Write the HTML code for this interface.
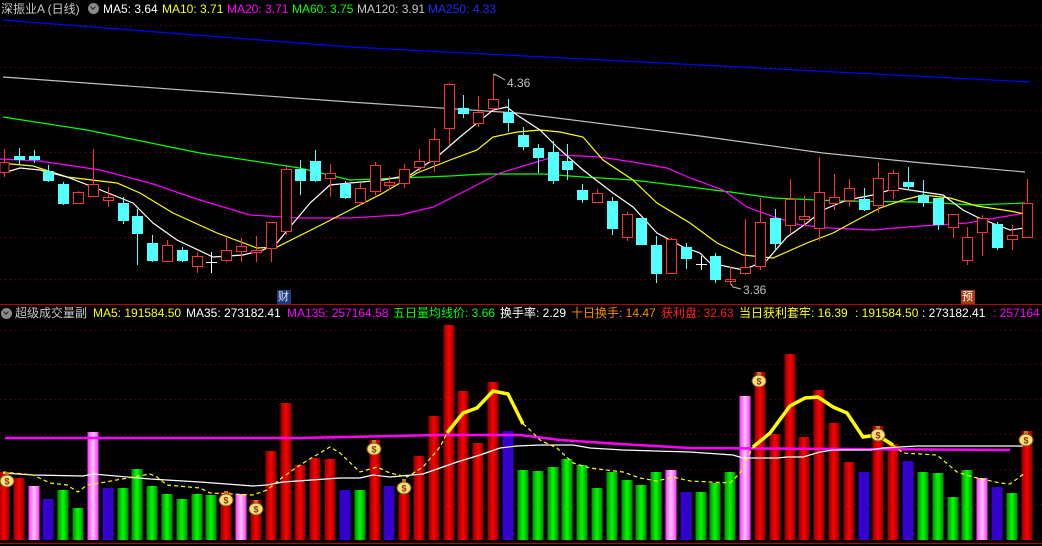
<!DOCTYPE html>
<html><head><meta charset="utf-8"><style>
html,body{margin:0;padding:0;background:#000;width:1042px;height:546px;overflow:hidden}
#w{position:relative;width:1042px;height:546px}
svg{position:absolute;left:0;top:0}
.t{position:absolute;font-family:"Liberation Sans","Noto Sans CJK SC",sans-serif;font-size:12px;white-space:nowrap;line-height:14px}
.ic{position:absolute;width:11px;height:11px;border-radius:50%;background:#8a8a8a}
.ic:after{content:"";position:absolute;left:3px;top:2px;width:3px;height:3px;border-right:1.5px solid #222;border-bottom:1.5px solid #222;transform:rotate(45deg)}
</style></head><body><div id="w">
<svg width="1042" height="546" viewBox="0 0 1042 546">
<defs>
<linearGradient id="gr" x1="0" x2="1"><stop offset="0" stop-color="#8a0000"/><stop offset=".5" stop-color="#ff0000"/><stop offset="1" stop-color="#8a0000"/></linearGradient>
<linearGradient id="gg" x1="0" x2="1"><stop offset="0" stop-color="#008a00"/><stop offset=".5" stop-color="#00ff00"/><stop offset="1" stop-color="#008a00"/></linearGradient>
<linearGradient id="gp" x1="0" x2="1"><stop offset="0" stop-color="#ff30ff"/><stop offset=".5" stop-color="#ffc8ff"/><stop offset="1" stop-color="#ff30ff"/></linearGradient>
</defs>
<g stroke="#8a0000" stroke-dasharray="1 4" stroke-width="1">
<line x1="0" x2="1042" y1="25.5" y2="25.5"/><line x1="0" x2="1042" y1="67.5" y2="67.5"/><line x1="0" x2="1042" y1="110.5" y2="110.5"/><line x1="0" x2="1042" y1="152.5" y2="152.5"/><line x1="0" x2="1042" y1="195.5" y2="195.5"/><line x1="0" x2="1042" y1="237.5" y2="237.5"/><line x1="0" x2="1042" y1="279.5" y2="279.5"/>
<line x1="0" x2="1042" y1="330.5" y2="330.5"/><line x1="0" x2="1042" y1="364.5" y2="364.5"/><line x1="0" x2="1042" y1="399.5" y2="399.5"/><line x1="0" x2="1042" y1="434.5" y2="434.5"/><line x1="0" x2="1042" y1="469.5" y2="469.5"/><line x1="0" x2="1042" y1="504.5" y2="504.5"/>
</g>
<line x1="0" x2="1042" y1="304.5" y2="304.5" stroke="#b00000"/>
<line x1="0" x2="1042" y1="543.5" y2="543.5" stroke="#b00000"/>
<!-- MA lines -->
<g fill="none" stroke-width="1.2">
<polyline stroke="#0000ff" points="3,20 350,47 603,60 1030,82"/>
<polyline stroke="#c0c0c0" points="3,77 350,102 517,113 700,136 823,153 923,163 1025,172"/>
<polyline stroke="#00ff00" points="3,117 87,130 200,153 300,168 350,180 450,176 483,174 543,174 583,177 633,180 690,187 730,192 773,198 840,201 923,202 973,205 1025,203"/>
<polyline stroke="#ff00ff" points="0,159 40,161 100,170 150,183 200,200 250,215 300,218 350,218 400,215 433,207 467,190 500,173 533,163 560,155 600,157 633,162 667,168 690,178 723,190 747,207 777,218 800,225 830,228 873,230 907,227 937,225 967,223 990,219 1025,213"/>
<polyline stroke="#ffff00" points="0,163 33,166 67,177 117,183 140,193 173,213 217,233 257,248 277,247 317,227 350,210 383,193 417,173 450,160 477,150 493,137 517,132 540,130 560,132 583,137 603,160 633,180 657,203 690,223 717,243 743,255 773,258 807,243 833,233 857,220 880,208 903,200 923,195 950,198 977,206 1010,211 1025,214"/>
<polyline stroke="#ffffff" points="3,173 20,168 40,170 67,177 93,187 133,203 153,223 177,240 213,257 243,255 263,250 277,243 290,227 310,203 330,185 350,183 383,180 410,175 437,157 460,137 493,110 507,107 517,115 540,130 557,147 583,170 613,193 633,207 657,233 683,247 700,253 710,263 743,270 767,260 787,237 807,223 823,210 847,200 873,195 897,188 923,192 943,195 963,210 977,217 997,225 1010,230 1025,228"/>
</g>
<!-- red candles -->
<g stroke="#ff3232" fill="#000" stroke-width="1">
<line x1="4.5" x2="4.5" y1="149" y2="177"/><rect x="0" y="162.5" width="9" height="10"/>
<line x1="78.5" x2="78.5" y1="191" y2="203"/><rect x="73.5" y="192.5" width="10" height="11"/>
<line x1="93.5" x2="93.5" y1="149" y2="197"/><rect x="88.5" y="184.5" width="10" height="12"/>
<line x1="108.5" x2="108.5" y1="187" y2="207"/><rect x="103.5" y="197.5" width="10" height="3"/>
<line x1="167.5" x2="167.5" y1="240" y2="262"/><rect x="162.5" y="245.5" width="10" height="16"/>
<line x1="197.5" x2="197.5" y1="252" y2="273"/><rect x="192.5" y="256.5" width="10" height="10"/>
<line x1="226.5" x2="226.5" y1="238" y2="262"/><rect x="221.5" y="250.5" width="10" height="10"/>
<line x1="241.5" x2="241.5" y1="238" y2="262"/><rect x="236.5" y="246.5" width="10" height="5"/>
<line x1="256.5" x2="256.5" y1="236" y2="262"/><rect x="251.5" y="250.5" width="10" height="2"/>
<line x1="271.5" x2="271.5" y1="222" y2="262"/><rect x="266.5" y="222.5" width="10" height="26"/>
<line x1="286.5" x2="286.5" y1="166" y2="235"/><rect x="281.5" y="169.5" width="10" height="62"/>
<line x1="330.5" x2="330.5" y1="164" y2="197"/><rect x="325.5" y="173.5" width="10" height="5"/>
<line x1="360.5" x2="360.5" y1="183" y2="205"/><rect x="355.5" y="188.5" width="10" height="14"/>
<line x1="375.5" x2="375.5" y1="162" y2="195"/><rect x="370.5" y="165.5" width="10" height="26"/>
<line x1="389.5" x2="389.5" y1="176" y2="190"/><rect x="384.5" y="182.5" width="10" height="3"/>
<line x1="404.5" x2="404.5" y1="164" y2="188"/><rect x="399.5" y="169.5" width="10" height="14"/>
<line x1="419.5" x2="419.5" y1="149" y2="172"/><rect x="414.5" y="161.5" width="10" height="6"/>
<line x1="434.5" x2="434.5" y1="128" y2="172"/><rect x="429.5" y="139.5" width="10" height="22"/>
<line x1="449.5" x2="449.5" y1="83" y2="145"/><rect x="444.5" y="84.5" width="10" height="44"/>
<line x1="478.5" x2="478.5" y1="96" y2="127"/><rect x="473.5" y="112.5" width="10" height="11"/>
<line x1="493.5" x2="493.5" y1="76" y2="110"/><rect x="488.5" y="99.5" width="10" height="9"/>
<line x1="597.5" x2="597.5" y1="189" y2="203"/><rect x="592.5" y="193.5" width="10" height="9"/>
<line x1="627.5" x2="627.5" y1="212" y2="241"/><rect x="622.5" y="214.5" width="10" height="23"/>
<line x1="671.5" x2="671.5" y1="238" y2="274"/><rect x="666.5" y="239.5" width="10" height="34"/>
<line x1="730.5" x2="730.5" y1="267" y2="285"/><rect x="725.5" y="279.5" width="10" height="2"/>
<line x1="745.5" x2="745.5" y1="219" y2="275"/><rect x="740.5" y="267.5" width="10" height="6"/>
<line x1="760.5" x2="760.5" y1="198" y2="270"/><rect x="755.5" y="222.5" width="10" height="44"/>
<line x1="790.5" x2="790.5" y1="179" y2="233"/><rect x="785.5" y="199.5" width="10" height="26"/>
<line x1="804.5" x2="804.5" y1="196" y2="226"/><rect x="799.5" y="216.5" width="10" height="3"/>
<line x1="819.5" x2="819.5" y1="157" y2="241"/><rect x="814.5" y="192.5" width="10" height="36"/>
<line x1="834.5" x2="834.5" y1="174" y2="210"/><rect x="829.5" y="197.5" width="10" height="6"/>
<line x1="849.5" x2="849.5" y1="179" y2="207"/><rect x="844.5" y="188.5" width="10" height="12"/>
<line x1="878.5" x2="878.5" y1="162" y2="213"/><rect x="873.5" y="178.5" width="10" height="27"/>
<line x1="893.5" x2="893.5" y1="170" y2="199"/><rect x="888.5" y="173.5" width="10" height="17"/>
<line x1="953.5" x2="953.5" y1="214" y2="238"/><rect x="948.5" y="214.5" width="10" height="13"/>
<line x1="967.5" x2="967.5" y1="227" y2="265"/><rect x="962.5" y="237.5" width="10" height="23"/>
<line x1="982.5" x2="982.5" y1="215" y2="256"/><rect x="977.5" y="218.5" width="10" height="14"/>
<line x1="1012.5" x2="1012.5" y1="225" y2="250"/><rect x="1007.5" y="235.5" width="10" height="4"/>
<line x1="1027.5" x2="1027.5" y1="179" y2="237"/><rect x="1022.5" y="203.5" width="10" height="34"/>
</g>
<!-- cyan candles -->
<g stroke="#54ffff" fill="#54ffff" stroke-width="1">
<line x1="19.5" x2="19.5" y1="148" y2="165"/><rect x="14.5" y="156.5" width="10" height="3"/>
<line x1="34.5" x2="34.5" y1="150" y2="163"/><rect x="29.5" y="156.5" width="10" height="3"/>
<line x1="48.5" x2="48.5" y1="165" y2="182"/><rect x="43.5" y="171.5" width="10" height="9"/>
<line x1="63.5" x2="63.5" y1="182" y2="205"/><rect x="58.5" y="184.5" width="10" height="19"/>
<line x1="123.5" x2="123.5" y1="197" y2="224"/><rect x="118.5" y="203.5" width="10" height="17"/>
<line x1="137.5" x2="137.5" y1="209" y2="265"/><rect x="132.5" y="216.5" width="10" height="17"/>
<line x1="152.5" x2="152.5" y1="235" y2="262"/><rect x="147.5" y="243.5" width="10" height="17"/>
<line x1="182.5" x2="182.5" y1="247" y2="262"/><rect x="177.5" y="250.5" width="10" height="10"/>
<line x1="300.5" x2="300.5" y1="160" y2="195"/><rect x="295.5" y="169.5" width="10" height="11"/>
<line x1="315.5" x2="315.5" y1="150" y2="182"/><rect x="310.5" y="161.5" width="10" height="19"/>
<line x1="345.5" x2="345.5" y1="181" y2="199"/><rect x="340.5" y="184.5" width="10" height="13"/>
<line x1="463.5" x2="463.5" y1="95" y2="118"/><rect x="458.5" y="108.5" width="10" height="5"/>
<line x1="508.5" x2="508.5" y1="99" y2="132"/><rect x="503.5" y="112.5" width="10" height="10"/>
<line x1="523.5" x2="523.5" y1="127" y2="150"/><rect x="518.5" y="135.5" width="10" height="11"/>
<line x1="538.5" x2="538.5" y1="144" y2="173"/><rect x="533.5" y="148.5" width="10" height="9"/>
<line x1="553.5" x2="553.5" y1="141" y2="184"/><rect x="548.5" y="152.5" width="10" height="28"/>
<line x1="567.5" x2="567.5" y1="144" y2="180"/><rect x="562.5" y="161.5" width="10" height="8"/>
<line x1="582.5" x2="582.5" y1="184" y2="203"/><rect x="577.5" y="190.5" width="10" height="9"/>
<line x1="612.5" x2="612.5" y1="197" y2="235"/><rect x="607.5" y="201.5" width="10" height="27"/>
<line x1="641.5" x2="641.5" y1="218" y2="245"/><rect x="636.5" y="218.5" width="10" height="26"/>
<line x1="656.5" x2="656.5" y1="236" y2="283"/><rect x="651.5" y="245.5" width="10" height="28"/>
<line x1="686.5" x2="686.5" y1="243" y2="269"/><rect x="681.5" y="247.5" width="10" height="11"/>
<line x1="715.5" x2="715.5" y1="253" y2="283"/><rect x="710.5" y="256.5" width="10" height="23"/>
<line x1="775.5" x2="775.5" y1="209" y2="250"/><rect x="770.5" y="218.5" width="10" height="25"/>
<line x1="864.5" x2="864.5" y1="188" y2="211"/><rect x="859.5" y="199.5" width="10" height="10"/>
<line x1="908.5" x2="908.5" y1="167" y2="190"/><rect x="903.5" y="182.5" width="10" height="4"/>
<line x1="923.5" x2="923.5" y1="180" y2="207"/><rect x="918.5" y="195.5" width="10" height="7"/>
<line x1="938.5" x2="938.5" y1="198" y2="230"/><rect x="933.5" y="198.5" width="10" height="26"/>
<line x1="997.5" x2="997.5" y1="222" y2="250"/><rect x="992.5" y="224.5" width="10" height="23"/>
</g>
<g stroke="#fff"><line x1="211.5" x2="211.5" y1="252" y2="273"/><line x1="206" x2="217" y1="262.5" y2="262.5"/>
<line x1="701.5" x2="701.5" y1="256" y2="270"/><line x1="696" x2="707" y1="264.5" y2="264.5"/></g>
<g stroke="#c0c0c0" fill="none"><polyline points="494,76 494,74 498,76 505,80"/><polyline points="731,284 733,287 741,289"/></g>
<text x="507" y="87" fill="#c0c0c0" font-family="Liberation Sans" font-size="12">4.36</text>
<text x="743" y="294" fill="#c0c0c0" font-family="Liberation Sans" font-size="12">3.36</text>
<!-- volume bars -->
<g>
<rect x="-1.5" y="472" width="11" height="68" fill="url(#gr)"/>
<rect x="13.5" y="478" width="11" height="62" fill="url(#gr)"/>
<rect x="28.5" y="486" width="11" height="54" fill="url(#gp)"/>
<rect x="42.5" y="499" width="11" height="41" fill="#3300cc"/>
<rect x="57.5" y="490" width="11" height="50" fill="url(#gg)"/>
<rect x="72.5" y="508" width="11" height="32" fill="url(#gg)"/>
<rect x="87.5" y="432" width="11" height="108" fill="url(#gp)"/>
<rect x="102.5" y="488" width="11" height="52" fill="#3300cc"/>
<rect x="117.5" y="488" width="11" height="52" fill="url(#gg)"/>
<rect x="131.5" y="469" width="11" height="71" fill="url(#gg)"/>
<rect x="146.5" y="486" width="11" height="54" fill="url(#gg)"/>
<rect x="161.5" y="494" width="11" height="46" fill="url(#gg)"/>
<rect x="176.5" y="499" width="11" height="41" fill="url(#gg)"/>
<rect x="191.5" y="494" width="11" height="46" fill="url(#gg)"/>
<rect x="205.5" y="495" width="11" height="45" fill="url(#gg)"/>
<rect x="220.5" y="492" width="11" height="48" fill="url(#gr)"/>
<rect x="235.5" y="494" width="11" height="46" fill="url(#gp)"/>
<rect x="250.5" y="500" width="11" height="40" fill="url(#gr)"/>
<rect x="265.5" y="451" width="11" height="89" fill="url(#gr)"/>
<rect x="280.5" y="403" width="11" height="137" fill="url(#gr)"/>
<rect x="294.5" y="465" width="11" height="75" fill="url(#gr)"/>
<rect x="309.5" y="458" width="11" height="82" fill="url(#gr)"/>
<rect x="324.5" y="459" width="11" height="81" fill="url(#gr)"/>
<rect x="339.5" y="490" width="11" height="50" fill="#3300cc"/>
<rect x="354.5" y="490" width="11" height="50" fill="url(#gg)"/>
<rect x="369.5" y="440" width="11" height="100" fill="url(#gr)"/>
<rect x="383.5" y="486" width="11" height="54" fill="#3300cc"/>
<rect x="398.5" y="494" width="11" height="46" fill="url(#gr)"/>
<rect x="413.5" y="456" width="11" height="84" fill="url(#gr)"/>
<rect x="428.5" y="416" width="11" height="124" fill="url(#gr)"/>
<rect x="443.5" y="325" width="11" height="215" fill="url(#gr)"/>
<rect x="457.5" y="391" width="11" height="149" fill="url(#gr)"/>
<rect x="472.5" y="443" width="11" height="97" fill="url(#gr)"/>
<rect x="487.5" y="382" width="11" height="158" fill="url(#gr)"/>
<rect x="502.5" y="431" width="11" height="109" fill="#3300cc"/>
<rect x="517.5" y="470" width="11" height="70" fill="url(#gg)"/>
<rect x="532.5" y="471" width="11" height="69" fill="url(#gg)"/>
<rect x="547.5" y="467" width="11" height="73" fill="url(#gg)"/>
<rect x="561.5" y="459" width="11" height="81" fill="url(#gg)"/>
<rect x="576.5" y="465" width="11" height="75" fill="url(#gg)"/>
<rect x="591.5" y="488" width="11" height="52" fill="url(#gg)"/>
<rect x="606.5" y="472" width="11" height="68" fill="url(#gg)"/>
<rect x="621.5" y="480" width="11" height="60" fill="url(#gg)"/>
<rect x="635.5" y="485" width="11" height="55" fill="url(#gg)"/>
<rect x="650.5" y="472" width="11" height="68" fill="url(#gg)"/>
<rect x="665.5" y="470" width="11" height="70" fill="url(#gp)"/>
<rect x="680.5" y="492" width="11" height="48" fill="#3300cc"/>
<rect x="695.5" y="492" width="11" height="48" fill="url(#gg)"/>
<rect x="709.5" y="483" width="11" height="57" fill="url(#gg)"/>
<rect x="724.5" y="472" width="11" height="68" fill="url(#gg)"/>
<rect x="739.5" y="396" width="11" height="144" fill="url(#gp)"/>
<rect x="754.5" y="372" width="11" height="168" fill="url(#gr)"/>
<rect x="769.5" y="434" width="11" height="106" fill="url(#gr)"/>
<rect x="784.5" y="354" width="11" height="186" fill="url(#gr)"/>
<rect x="798.5" y="437" width="11" height="103" fill="url(#gr)"/>
<rect x="813.5" y="390" width="11" height="150" fill="url(#gr)"/>
<rect x="828.5" y="423" width="11" height="117" fill="url(#gr)"/>
<rect x="843.5" y="462" width="11" height="78" fill="url(#gr)"/>
<rect x="858.5" y="472" width="11" height="68" fill="#3300cc"/>
<rect x="872.5" y="426" width="11" height="114" fill="url(#gr)"/>
<rect x="887.5" y="444" width="11" height="96" fill="url(#gr)"/>
<rect x="902.5" y="461" width="11" height="79" fill="#3300cc"/>
<rect x="917.5" y="472" width="11" height="68" fill="url(#gg)"/>
<rect x="932.5" y="473" width="11" height="67" fill="url(#gg)"/>
<rect x="947.5" y="497" width="11" height="43" fill="url(#gg)"/>
<rect x="961.5" y="470" width="11" height="70" fill="url(#gg)"/>
<rect x="976.5" y="478" width="11" height="62" fill="url(#gp)"/>
<rect x="991.5" y="487" width="11" height="53" fill="#3300cc"/>
<rect x="1006.5" y="493" width="11" height="47" fill="url(#gg)"/>
<rect x="1021.5" y="431" width="11" height="109" fill="url(#gr)"/>
</g>
<!-- volume lines -->
<g fill="none">
<polyline stroke="#ff00ff" stroke-width="2.5" points="5,438 300,438 345,437 440,435 520,435 560,440 620,444 690,448 1010,450"/>
<polyline stroke="#ffffff" stroke-width="1.2" points="3,473 33,475 83,476 93,474 150,479 200,482 253,486 267,485 283,482 340,478 360,478 373,475 390,477 423,474 440,468 457,462 480,455 500,448 517,446 540,445 573,445 590,448 623,450 690,452 733,455 743,458 777,458 787,457 803,457 820,452 833,450 870,450 883,448 917,446 973,446 1023,446"/>
<polyline stroke="#ffff00" stroke-width="1.2" stroke-dasharray="4 3" points="3,472 33,475 50,483 67,485 78,492 87,485 100,483 133,477 150,474 157,477 167,485 200,488 210,493 253,495 267,490 283,477 300,465 313,457 330,447 340,453 360,472 377,467 390,473 407,477 423,467 440,447 447,433"/>
<polyline stroke="#ffff00" stroke-width="1.2" stroke-dasharray="4 3" points="523,424 527,427 540,440 557,448 573,463 590,468 623,472 640,478 657,481 673,477 690,481 730,483 740,473 753,447"/>
<polyline stroke="#ffff00" stroke-width="1.2" stroke-dasharray="4 3" points="893,445 903,453 937,455 957,472 973,477 1000,483 1010,484 1025,473"/>
<polyline stroke="#ffff00" stroke-width="3.5" points="447,433 463,413 477,408 493,391 508,394 523,424"/>
<polyline stroke="#ffff00" stroke-width="3.5" points="753,447 770,433 790,406 805,398 818,397 833,407 847,413 863,437 877,435 893,445"/>
</g>
<!-- money bags -->
<g font-family="Liberation Sans" font-size="9" font-weight="bold" text-anchor="middle">
<g transform="translate(7,480)"><rect x="-2" y="-8" width="4" height="3" fill="#c08020"/><ellipse cx="0" cy="1" rx="7" ry="6" fill="#f7e07a" stroke="#7a5010"/><text x="0" y="4.5" fill="#8a3010">$</text></g>
<g transform="translate(226,499)"><rect x="-2" y="-8" width="4" height="3" fill="#c08020"/><ellipse cx="0" cy="1" rx="7" ry="6" fill="#f7e07a" stroke="#7a5010"/><text x="0" y="4.5" fill="#8a3010">$</text></g>
<g transform="translate(256,508)"><rect x="-2" y="-8" width="4" height="3" fill="#c08020"/><ellipse cx="0" cy="1" rx="7" ry="6" fill="#f7e07a" stroke="#7a5010"/><text x="0" y="4.5" fill="#8a3010">$</text></g>
<g transform="translate(374,448)"><rect x="-2" y="-8" width="4" height="3" fill="#c08020"/><ellipse cx="0" cy="1" rx="7" ry="6" fill="#f7e07a" stroke="#7a5010"/><text x="0" y="4.5" fill="#8a3010">$</text></g>
<g transform="translate(404,487)"><rect x="-2" y="-8" width="4" height="3" fill="#c08020"/><ellipse cx="0" cy="1" rx="7" ry="6" fill="#f7e07a" stroke="#7a5010"/><text x="0" y="4.5" fill="#8a3010">$</text></g>
<g transform="translate(759,380)"><rect x="-2" y="-8" width="4" height="3" fill="#c08020"/><ellipse cx="0" cy="1" rx="7" ry="6" fill="#f7e07a" stroke="#7a5010"/><text x="0" y="4.5" fill="#8a3010">$</text></g>
<g transform="translate(878,434)"><rect x="-2" y="-8" width="4" height="3" fill="#c08020"/><ellipse cx="0" cy="1" rx="7" ry="6" fill="#f7e07a" stroke="#7a5010"/><text x="0" y="4.5" fill="#8a3010">$</text></g>
<g transform="translate(1026,439)"><rect x="-2" y="-8" width="4" height="3" fill="#c08020"/><ellipse cx="0" cy="1" rx="7" ry="6" fill="#f7e07a" stroke="#7a5010"/><text x="0" y="4.5" fill="#8a3010">$</text></g>
</g>
<rect x="277" y="290" width="14" height="14" fill="#1c3c7c"/>
<rect x="961" y="290" width="14" height="14" fill="#a83a10"/>
</svg>
<span class="t" style="left:278px;top:290px;font-size:11px;color:#e0e8ff">财</span>
<span class="t" style="left:962px;top:290px;font-size:11px;color:#fff">预</span>
<span class="t" style="left:1px;top:2px;color:#c8c8c8">深振业A (日线)</span>
<span class="ic" style="left:88px;top:3px"></span>
<span class="t" style="left:103px;top:2px;color:#fff">MA5: 3.64</span>
<span class="t" style="left:162px;top:2px;color:#ffff00">MA10: 3.71</span>
<span class="t" style="left:227px;top:2px;color:#ff00ff">MA20: 3.71</span>
<span class="t" style="left:292px;top:2px;color:#00ff00">MA60: 3.75</span>
<span class="t" style="left:357px;top:2px;color:#c8c8c8">MA120: 3.91</span>
<span class="t" style="left:428px;top:2px;color:#1a2aff">MA250: 4.33</span>
<span class="ic" style="left:1px;top:308px"></span>
<span class="t" style="left:15px;top:306px;color:#c8c8c8">超级成交量副</span>
<span class="t" style="left:93px;top:306px;color:#ffff00">MA5: 191584.50</span>
<span class="t" style="left:186px;top:306px;color:#fff">MA35: 273182.41</span>
<span class="t" style="left:287px;top:306px;color:#ff00ff">MA135: 257164.58</span>
<span class="t" style="left:393px;top:306px;color:#00ff00">五日量均线价: 3.66</span>
<span class="t" style="left:500px;top:306px;color:#fff">换手率: 2.29</span>
<span class="t" style="left:571px;top:306px;color:#ff8c00">十日换手: 14.47</span>
<span class="t" style="left:661px;top:306px;color:#ff2020">获利盘: 32.63</span>
<span class="t" style="left:739px;top:306px;color:#ffff00">当日获利套牢: 16.39</span>
<span class="t" style="left:855px;top:306px;color:#ffff00">: 191584.50</span>
<span class="t" style="left:922px;top:306px;color:#fff">: 273182.41</span>
<span class="t" style="left:993px;top:306px;color:#ff00ff">: 257164</span>
</div></body></html>
